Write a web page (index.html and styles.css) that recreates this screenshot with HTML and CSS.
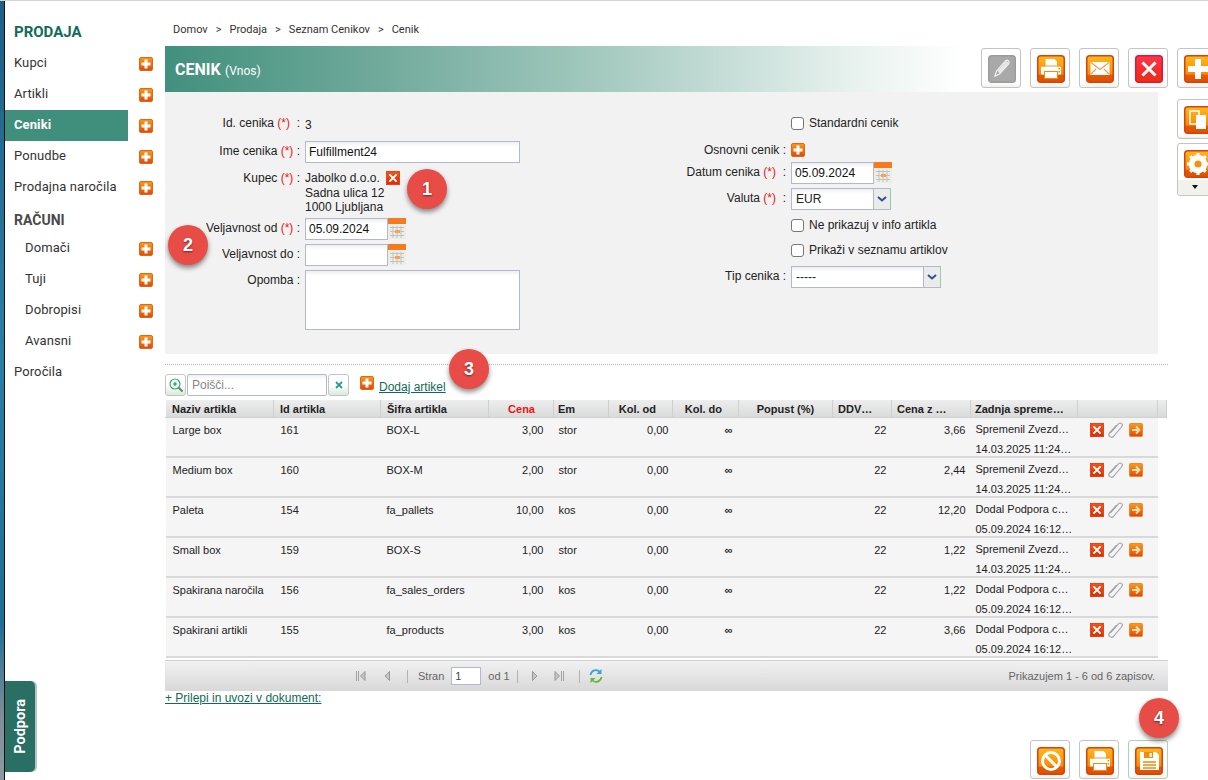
FILE: index.html
```html
<!DOCTYPE html>
<html lang="sl">
<head>
<meta charset="utf-8">
<title>Cenik</title>
<link rel="stylesheet" href="styles.css">
</head>
<body>
<svg class="defs" width="0" height="0" aria-hidden="true">
  <defs>
    <linearGradient id="go" x1="0" y1="0" x2="0" y2="1">
      <stop offset="0" stop-color="#ffb81c"/><stop offset=".7" stop-color="#f98a08"/><stop offset=".72" stop-color="#e35a04"/><stop offset="1" stop-color="#e04f02"/>
    </linearGradient>
    <linearGradient id="gr" x1="0" y1="0" x2="0" y2="1">
      <stop offset="0" stop-color="#f7394a"/><stop offset=".65" stop-color="#f22b2b"/><stop offset="1" stop-color="#e8320c"/>
    </linearGradient>
    <linearGradient id="gs" x1="0" y1="0" x2="0" y2="1">
      <stop offset="0" stop-color="#fb9b14"/><stop offset="1" stop-color="#e2480a"/>
    </linearGradient>
    <linearGradient id="gx" x1="0" y1="0" x2="0" y2="1">
      <stop offset="0" stop-color="#f5541b"/><stop offset="1" stop-color="#dc2c02"/>
    </linearGradient>
    <symbol id="plus" viewBox="0 0 14 14">
      <rect x=".5" y=".5" width="13" height="13" rx="1.500" fill="url(#gs)" stroke="#dd6a1a"/>
      <path d="M5.500 2.500h3v3h3v3h-3v3h-3v-3h-3v-3h3z" fill="#fff"/>
    </symbol>
    <symbol id="del" viewBox="0 0 14 14">
      <rect x=".5" y=".5" width="13" height="13" fill="url(#gx)" stroke="#e8431a"/>
      <path d="M3.400 3.400l7.200 7.200M10.600 3.400l-7.200 7.200" stroke="#fff" stroke-width="2"/>
    </symbol>
    <symbol id="next" viewBox="0 0 14 14">
      <rect x=".5" y=".5" width="13" height="13" rx="1" fill="url(#gs)" stroke="#ee8a2e"/>
      <path d="M3 7h7M7 3.500L10.500 7 7 10.500" fill="none" stroke="#ffe0b0" stroke-width="1.800"/>
    </symbol>
    <symbol id="clip" viewBox="0 0 18 18">
      <path d="M4.500 12L12.500 2.800C14.500 .8 17.500 3.300 15.800 5.500L7.500 15.500C5.500 17.500 1.500 15 3.300 12.200L10.500 4" fill="none" stroke="#a2a2a2" stroke-width="1.100"/>
    </symbol>
    <symbol id="cal" viewBox="0 0 18 21">
      <rect y="0" width="18" height="6" fill="#f47b20"/>
      <rect y="6" width="18" height="15" fill="#ecece8"/>
      <path d="M2 9.500h14M2 13.500h14M2 17.500h14M5 8v12M9 8v12M13 8v12" stroke="#c2c2c0" stroke-width="1"/>
      <rect x="7" y="12" width="5" height="3" fill="#f9a15a"/>
    </symbol>
    <symbol id="tile-o" viewBox="0 0 28 28">
      <rect x=".75" y=".75" width="26.500" height="26.500" rx="3" fill="url(#go)" stroke="#d8430c" stroke-width="1.500"/>
    </symbol>
    <symbol id="tile-r" viewBox="0 0 28 28">
      <rect x=".75" y=".75" width="26.500" height="26.500" rx="3" fill="url(#gr)" stroke="#e8123c" stroke-width="1.500"/>
    </symbol>
    <symbol id="tile-g" viewBox="0 0 28 28">
      <rect x=".75" y=".75" width="26.500" height="26.500" rx="3" fill="#a9a9a9" stroke="#9c9c9c" stroke-width="1.500"/>
    </symbol>
    <symbol id="printer" viewBox="0 0 28 28">
      <path d="M8.500 12V4h9l2.500 2.500V12z" fill="#fff"/>
      <path d="M4 11.500h20v8H4z" fill="#fff"/>
      <path d="M4 11h20" stroke="#f29a2a" stroke-width="1"/>
      <rect x="21.500" y="13" width="1.500" height="1.500" fill="#f08a10"/>
      <rect x="21.500" y="16" width="1.500" height="1.500" fill="#f08a10"/>
      <rect x="7.500" y="16.500" width="13" height="7" fill="#fff" stroke="#f08a10"/>
    </symbol>
  </defs>
</svg>

<div class="shell">
  <div class="edge"></div>

  <nav class="side">
    <h2 class="side-head">PRODAJA</h2>
    <div class="nav-row"><a class="nav-link">Kupci</a><svg class="ico14"><use href="#plus"/></svg></div>
    <div class="nav-row"><a class="nav-link">Artikli</a><svg class="ico14"><use href="#plus"/></svg></div>
    <div class="nav-row"><a class="nav-link nav-active">Ceniki</a><svg class="ico14"><use href="#plus"/></svg></div>
    <div class="nav-row"><a class="nav-link">Ponudbe</a><svg class="ico14"><use href="#plus"/></svg></div>
    <div class="nav-row"><a class="nav-link">Prodajna naročila</a><svg class="ico14"><use href="#plus"/></svg></div>
    <h3 class="side-sub">RAČUNI</h3>
    <div class="nav-row"><a class="nav-link nav-indent">Domači</a><svg class="ico14"><use href="#plus"/></svg></div>
    <div class="nav-row"><a class="nav-link nav-indent">Tuji</a><svg class="ico14"><use href="#plus"/></svg></div>
    <div class="nav-row"><a class="nav-link nav-indent">Dobropisi</a><svg class="ico14"><use href="#plus"/></svg></div>
    <div class="nav-row"><a class="nav-link nav-indent">Avansni</a><svg class="ico14"><use href="#plus"/></svg></div>
    <div class="nav-row"><a class="nav-link">Poročila</a></div>
  </nav>

  <main class="main">
    <div class="crumbs"><span>Domov</span><b>&gt;</b><span>Prodaja</span><b>&gt;</b><span>Seznam Cenikov</span><b>&gt;</b><span>Cenik</span></div>

    <div class="head-row">
      <div class="title-bar"><strong>CENIK</strong> <span>(Vnos)</span></div>
      <div class="tools">
        <button class="tool"><svg class="tile" viewBox="0 0 28 28"><use href="#tile-g"/><path d="M7 21l1.500-5 9-10c1-1 2.400-.6 3 0s1 1.800 0 3l-9 10z" fill="none" stroke="#eee" stroke-width="1.300"/><path d="M9.500 16l9-10 2.500 2.500-9 10z" fill="#e8e8e8"/></svg></button>
        <button class="tool"><svg class="tile" viewBox="0 0 28 28"><use href="#tile-o"/><use href="#printer"/></svg></button>
        <button class="tool"><svg class="tile" viewBox="0 0 28 28"><use href="#tile-o"/><rect x="4.500" y="7" width="19" height="13" fill="#fff"/><path d="M5 7.500l9 7 9-7M5 19l5-5M23 19l-5-5" fill="none" stroke="#f39a4a" stroke-width="1.100"/></svg></button>
        <button class="tool"><svg class="tile" viewBox="0 0 28 28"><use href="#tile-r"/><path d="M7.500 7.500l13 13M20.500 7.500l-13 13" stroke="#fff" stroke-width="3"/></svg></button>
        <button class="tool"><svg class="tile" viewBox="0 0 28 28"><use href="#tile-o"/><path d="M11 4h6v7h7v6h-7v7h-6v-7H4v-6h7z" fill="#fff"/></svg></button>
      </div>
    </div>

    <div class="form-row">
      <form class="panel">
        <div class="col col-l">
          <div class="fr h-id"><label class="lab">Id. cenika <i>(*)</i> &nbsp;:</label><span class="val val-id">3</span></div>
          <div class="fr h-ime"><label class="lab">Ime cenika <i>(*)</i> :</label><input class="inp inp-w" value="Fulfillment24"></div>
          <div class="fr h-kup"><label class="lab">Kupec <i>(*)</i> :</label>
            <div class="val kup"><div class="kup-top">Jabolko d.o.o. <svg class="ico14"><use href="#del"/></svg></div><div>Sadna ulica 12</div><div>1000 Ljubljana</div></div>
          </div>
          <div class="fr h-dat"><label class="lab">Veljavnost od <i>(*)</i> :</label><input class="inp inp-d" value="05.09.2024"><svg class="cal"><use href="#cal"/></svg></div>
          <div class="fr h-dat2"><label class="lab">Veljavnost do :</label><input class="inp inp-d"><svg class="cal"><use href="#cal"/></svg></div>
          <div class="fr"><label class="lab">Opomba :</label><textarea class="inp area"></textarea></div>
        </div>
        <div class="col col-r">
          <div class="fr h-r1"><span class="lab"></span><label class="chk"><input type="checkbox">Standardni cenik</label></div>
          <div class="fr h-r2"><label class="lab">Osnovni cenik :</label><svg class="ico14"><use href="#plus"/></svg></div>
          <div class="fr h-r3"><label class="lab">Datum cenika <i>(*)</i> &nbsp;:</label><input class="inp inp-d" value="05.09.2024"><svg class="cal"><use href="#cal"/></svg></div>
          <div class="fr h-r4"><label class="lab">Valuta <i>(*)</i> &nbsp;:</label><div class="sel sel-s"><span>EUR</span><em><svg width="10" height="6" viewBox="0 0 10 6"><path d="M1 1l4 3.500L9 1" fill="none" stroke="#2f4f8f" stroke-width="2"/></svg></em></div></div>
          <div class="fr h-r5"><span class="lab"></span><label class="chk"><input type="checkbox">Ne prikazuj v info artikla</label></div>
          <div class="fr h-r6"><span class="lab"></span><label class="chk"><input type="checkbox">Prikaži v seznamu artiklov</label></div>
          <div class="fr"><label class="lab">Tip cenika :</label><div class="sel sel-l"><span>-----</span><em><svg width="10" height="6" viewBox="0 0 10 6"><path d="M1 1l4 3.500L9 1" fill="none" stroke="#2f4f8f" stroke-width="2"/></svg></em></div></div>
        </div>
      </form>
      <div class="side-tools">
        <button class="tool"><svg class="tile" viewBox="0 0 28 28"><use href="#tile-o"/><path d="M6 5h9v13H6z" fill="none" stroke="#fff" stroke-width="1.500"/><rect x="12" y="9" width="10" height="14" fill="#fff"/></svg></button>
        <div class="tool tool-drop"><svg class="tile" viewBox="0 0 28 28"><use href="#tile-o"/><circle cx="14" cy="14" r="7" fill="none" stroke="#fff" stroke-width="4.500"/><path d="M14 3v22M3 14h22M6.200 6.200l15.600 15.600M21.800 6.200L6.200 21.800" stroke="#fff" stroke-width="3.200"/><circle cx="14" cy="14" r="3.500" fill="#f39010"/></svg><span class="caret"></span></div>
      </div>
    </div>

    <div class="dots"></div>

    <div class="search-row">
      <span class="s-btn"><svg width="16" height="16" viewBox="0 0 16 16"><circle cx="7" cy="7" r="5" fill="#eefbf2" stroke="#4aa56f" stroke-width="1.200"/><path d="M5 7h4M7 5v4" stroke="#1e9a4c" stroke-width="1.200"/><path d="M10.500 10.500l4 4" stroke="#4c8f5f" stroke-width="2"/></svg></span>
      <input class="inp s-inp" placeholder="Poišči...">
      <span class="s-btn"><svg width="10" height="10" viewBox="0 0 10 10"><path d="M2 2l6 6M8 2L2 8" stroke="#2b9d94" stroke-width="1.800"/></svg></span>
      <svg class="ico14 add-ico"><use href="#plus"/></svg>
      <a class="link add-link">Dodaj artikel</a>
    </div>

    <table class="grid">
      <colgroup><col class="c1"><col class="c2"><col class="c3"><col class="c4"><col class="c5"><col class="c6"><col class="c7"><col class="c8"><col class="c9"><col class="c10"><col class="c11"><col class="c12"><col class="c13"></colgroup>
      <thead><tr>
        <th>Naziv artikla</th><th>Id artikla</th><th>Šifra artikla</th><th class="r red">Cena</th><th>Em</th><th class="r">Kol. od</th><th class="r">Kol. do</th><th class="ctr">Popust (%)</th><th>DDV…</th><th>Cena z …</th><th>Zadnja spreme…</th><th></th><th></th>
      </tr></thead>
      <tbody>
        <tr><td>Large box</td><td>161</td><td>BOX-L</td><td class="r">3,00</td><td>stor</td><td class="r">0,00</td><td class="r">∞</td><td></td><td class="r">22</td><td class="r">3,66</td><td class="ch"><div class="ch-in">Spremenil Zvezd…<br>14.03.2025 11:24…</div></td><td class="acts"><svg class="ico14"><use href="#del"/></svg><svg class="clip"><use href="#clip"/></svg><svg class="ico14"><use href="#next"/></svg></td><td class="blank"></td></tr>
        <tr><td>Medium box</td><td>160</td><td>BOX-M</td><td class="r">2,00</td><td>stor</td><td class="r">0,00</td><td class="r">∞</td><td></td><td class="r">22</td><td class="r">2,44</td><td class="ch"><div class="ch-in">Spremenil Zvezd…<br>14.03.2025 11:24…</div></td><td class="acts"><svg class="ico14"><use href="#del"/></svg><svg class="clip"><use href="#clip"/></svg><svg class="ico14"><use href="#next"/></svg></td><td class="blank"></td></tr>
        <tr><td>Paleta</td><td>154</td><td>fa_pallets</td><td class="r">10,00</td><td>kos</td><td class="r">0,00</td><td class="r">∞</td><td></td><td class="r">22</td><td class="r">12,20</td><td class="ch"><div class="ch-in">Dodal Podpora c…<br>05.09.2024 16:12…</div></td><td class="acts"><svg class="ico14"><use href="#del"/></svg><svg class="clip"><use href="#clip"/></svg><svg class="ico14"><use href="#next"/></svg></td><td class="blank"></td></tr>
        <tr><td>Small box</td><td>159</td><td>BOX-S</td><td class="r">1,00</td><td>stor</td><td class="r">0,00</td><td class="r">∞</td><td></td><td class="r">22</td><td class="r">1,22</td><td class="ch"><div class="ch-in">Spremenil Zvezd…<br>14.03.2025 11:24…</div></td><td class="acts"><svg class="ico14"><use href="#del"/></svg><svg class="clip"><use href="#clip"/></svg><svg class="ico14"><use href="#next"/></svg></td><td class="blank"></td></tr>
        <tr><td>Spakirana naročila</td><td>156</td><td>fa_sales_orders</td><td class="r">1,00</td><td>kos</td><td class="r">0,00</td><td class="r">∞</td><td></td><td class="r">22</td><td class="r">1,22</td><td class="ch"><div class="ch-in">Dodal Podpora c…<br>05.09.2024 16:12…</div></td><td class="acts"><svg class="ico14"><use href="#del"/></svg><svg class="clip"><use href="#clip"/></svg><svg class="ico14"><use href="#next"/></svg></td><td class="blank"></td></tr>
        <tr><td>Spakirani artikli</td><td>155</td><td>fa_products</td><td class="r">3,00</td><td>kos</td><td class="r">0,00</td><td class="r">∞</td><td></td><td class="r">22</td><td class="r">3,66</td><td class="ch"><div class="ch-in">Dodal Podpora c…<br>05.09.2024 16:12…</div></td><td class="acts"><svg class="ico14"><use href="#del"/></svg><svg class="clip"><use href="#clip"/></svg><svg class="ico14"><use href="#next"/></svg></td><td class="blank"></td></tr>
      </tbody>
    </table>

    <div class="pager">
      <div class="pg-mid">
        <svg class="pg" viewBox="0 0 12 12"><path d="M1.500 1v10M3.500 1v10" stroke="#a5a5a5"/><path d="M10 1.500L5.500 6l4.500 4.500z" fill="#c5c5c5" stroke="#999"/></svg>
        <svg class="pg pg-g" viewBox="0 0 12 12"><path d="M8.500 1.500L4 6l4.500 4.500z" fill="#c5c5c5" stroke="#999"/></svg>
        <i class="sep"></i>
        <span class="pg-t">Stran</span><input class="pg-inp" value="1"><span class="pg-t">od 1</span>
        <i class="sep sep2"></i>
        <svg class="pg pg-n" viewBox="0 0 12 12"><path d="M3.500 1.500L8 6l-4.500 4.500z" fill="#c5c5c5" stroke="#999"/></svg>
        <svg class="pg pg-l" viewBox="0 0 12 12"><path d="M2 1.500L6.500 6 2 10.500z" fill="#c5c5c5" stroke="#999"/><path d="M8.500 1v10M10.500 1v10" stroke="#a5a5a5"/></svg>
        <i class="sep sep3"></i>
        <svg class="refresh" viewBox="0 0 16 16"><path d="M2.500 7a5.500 5.500 0 0 1 9.500-3" fill="none" stroke="#3fa3d1" stroke-width="1.800"/><path d="M13.500 1v5h-5z" fill="#3fa3d1"/><path d="M13.500 9a5.500 5.500 0 0 1-9.500 3" fill="none" stroke="#63b83f" stroke-width="1.800"/><path d="M2.500 15v-5h5z" fill="#63b83f"/></svg>
      </div>
      <span class="pg-info">Prikazujem 1 - 6 od 6 zapisov.</span>
    </div>
    <a class="link paste">+ Prilepi in uvozi v dokument:</a>

    <div class="foot-tools">
      <button class="tool"><svg class="tile" viewBox="0 0 28 28"><use href="#tile-o"/><circle cx="14" cy="14" r="8.500" fill="none" stroke="#fff" stroke-width="3"/><path d="M8 8l12 12" stroke="#fff" stroke-width="3"/></svg></button>
      <button class="tool"><svg class="tile" viewBox="0 0 28 28"><use href="#tile-o"/><use href="#printer"/></svg></button>
      <button class="tool tool-save"><svg class="tile" viewBox="0 0 28 28"><use href="#tile-o"/><path d="M5 5h16l3 3v15H5z" fill="#fff"/><rect x="9" y="5" width="9" height="6" fill="#f08a10"/><rect x="14.500" y="6" width="2.200" height="4" fill="#fff"/><path d="M8 15h13M8 18h13M8 21h13" stroke="#f08a10" stroke-width="1.300"/></svg></button>
    </div>
  </main>
</div>

<span class="badge b1">1</span>
<span class="badge b2">2</span>
<span class="badge b3">3</span>
<span class="badge b4">4</span>
<div class="podpora"><span>Podpora</span></div>
</body>
</html>
```

FILE: styles.css
```css
* { box-sizing: border-box; }
html, body { margin: 0; padding: 0; height: 100%; }
body {
  width: 1208px; height: 780px; overflow: hidden; position: relative;
  background: #fff; color: #222;
  font: 12px "Liberation Sans", Arial, sans-serif;
  border-top: 1px solid #d5d5d5;
}
.defs { position: absolute; }
.shell { display: flex; height: 779px; }
.edge {
  flex: 0 0 5px; border-right: 1px solid #111;
  background: linear-gradient(180deg, #1f5f86 0%, #2a7fa6 45%, #1e6f96 80%, #7f8f99 92%, #8a9aa0 100%);
}

/* sidebar */
.side { flex: 0 0 160px; padding-top: 22px; font-family: Roboto, sans-serif; font-size: 13px; color: #333; }
.side-head { margin: 0 0 0 9px; height: 25px; line-height: 18px; font-size: 15px; font-weight: 700; color: #126b59; }
.side-sub { margin: 0 0 0 9px; height: 30px; padding-top: 6px; line-height: 22px; font-size: 14px; font-weight: 700; color: #4a4a4a; }
.nav-row { display: flex; align-items: center; height: 31px; }
.nav-link { display: block; width: 123px; height: 31px; line-height: 30px; padding-left: 9px; flex: none; margin-right: 11px; letter-spacing: .1px; }
.nav-active { background: #3f8f7c; color: #fff; font-weight: 700; }
.nav-indent { padding-left: 20px; }
.ico14 { width: 14px; height: 14px; flex: none; display: block; }

/* main */
.main { flex: 1; min-width: 0; }
.crumbs { height: 45px; padding: 22px 0 0 8px; font: 11px/13px Roboto, sans-serif; color: #333; display: flex; }
.crumbs b { font-weight: 400; margin: 0 8px; }
.head-row { display: flex; height: 46px; }
.title-bar {
  flex: 0 0 806px; padding: 14px 0 0 10px; color: #fff; line-height: 18px;
  background: linear-gradient(90deg, #41907d 0%, #6fa99a 26%, #a8ccc2 56%, #e7f1ee 85%, #fff 99%);
}
.title-bar strong { font: 700 16px Roboto, sans-serif; }
.title-bar span { font: 12px Roboto, sans-serif; margin-left: 1px; }
.tools { display: flex; gap: 9px; padding: 2px 0 0 10px; flex: none; }
.tool {
  width: 40px; height: 40px; padding: 6px; margin: 0; flex: none; display: block;
  background: linear-gradient(180deg, #fff 0, #fff 88%, #f1f2ec 100%);
  border: 1px solid #c4c4c4; border-radius: 3px;
}
.tile { width: 28px; height: 28px; display: block; }
.form-row { display: flex; align-items: flex-start; }
.panel { flex: 0 0 993px; height: 262px; background: #f2f2f2; display: flex; padding-top: 20px; }
.col { flex: none; }
.col-l { width: 495px; }
.col-r { width: 498px; }
.fr { display: flex; align-items: flex-start; }
.lab { flex: none; width: 135px; text-align: right; margin-right: 5px; line-height: 20px; color: #222; white-space: nowrap; }
.col-r .lab { width: 126px; }
.lab i { font-style: normal; color: #f01414; }
.val { line-height: 14px; }
.h-id { height: 28px; margin-top: 1px; }
.val-id { padding-top: 5px; }
.h-ime { height: 30px; }
.h-kup { height: 45px; }
.h-kup .lab { margin-top: -3px; }
.kup-top { display: flex; gap: 6px; align-items: center; height: 15px; margin-top: -1px; }
.kup-top + div { margin-top: 1px; }
.h-dat { height: 26px; margin-top: 2px; }
.h-dat2 { height: 26px; }
.inp {
  display: block; margin: 0; padding: 0 3px; height: 22px; color: #111;
  font: 12px "Liberation Sans", Arial, sans-serif;
  border: 1px solid #b4b8cc; background: linear-gradient(180deg, #eef0ee 0, #fff 5px); outline: 0; border-radius: 0;
}
.inp-w { width: 215px; }
.inp-d { width: 83px; }
.cal { width: 18px; height: 21px; display: block; flex: none; }
.area { width: 215px; height: 60px; resize: none; }
.h-r1 { margin-top: -4px; height: 30px; align-items: center; }
.h-r2 { height: 24px; align-items: center; }
.h-r3 { height: 26px; }
.h-r4 { height: 24px; }
.h-r5 { height: 26px; align-items: center; }
.h-r6 { height: 24px; margin-bottom: 4px; align-items: center; }
.chk { display: flex; align-items: center; gap: 5px; height: 14px; }
.chk input { appearance: none; margin: 0; width: 13px; height: 13px; border: 1px solid #777; border-radius: 3px; background: #fff; }
.sel { display: flex; height: 22px; border: 1px solid #b4b8cc; border-right-color: #8fd0a8; background: linear-gradient(180deg, #eef0ee 0, #fff 5px); align-items: center; }
.sel span { flex: 1; padding-left: 4px; }
.sel em { flex: 0 0 17px; height: 20px; border-left: 1px solid #b4b8cc; background: #e9ecea; display: flex; align-items: center; justify-content: center; }
.sel-s { width: 100px; }
.sel-l { width: 150px; }
.side-tools { margin: 7px 0 0 19px; display: flex; flex-direction: column; gap: 4px; }
.tool-drop { height: 53px; position: relative; }
.tool-drop::before { content: ""; position: absolute; left: 0; right: 0; bottom: 0; height: 15px; background: #f1f2ec; border-radius: 0 0 3px 3px; }
.caret { position: absolute; z-index: 1; left: 14px; bottom: 6px; width: 0; height: 0; border: 3px solid transparent; border-top: 4px solid #111; border-bottom: 0; }
.dots { height: 1px; width: 1003px; margin-top: 10px; border-top: 1px dotted #b5b5b5; }
.search-row { display: flex; align-items: center; height: 35px; padding-top: 5px; }
.s-btn { width: 21px; height: 22px; border: 1px solid #c4c4c4; border-radius: 3px; display: flex; align-items: center; justify-content: center; background: linear-gradient(180deg, #fff 50%, #d9ebdc 100%); flex: none; }
.s-inp { width: 140px; height: 22px; border-radius: 2px; margin: 0 1px; padding: 0 4px; }
.s-inp::placeholder { color: #888; opacity: 1; }
.add-ico { margin: -4px 5px 0 11px; }
.link { color: #0f6b55; text-decoration: underline; }
.add-link { padding-top: 3px; }

/* table */
.grid { table-layout: fixed; width: 1001px; border-collapse: collapse; font-size: 11px; }
.c1, .c3 { width: 108px; }
.c2, .c11 { width: 107px; }
.c4 { width: 65px; } .c5 { width: 55px; } .c6 { width: 64px; } .c7 { width: 66px; } .c8 { width: 94px; }
.c9 { width: 59px; } .c10 { width: 79px; } .c12 { width: 80px; } .c13 { width: 9px; }
.grid th {
  height: 17px; padding: 1px 6px 0; text-align: left; font-weight: 700; color: #222; white-space: nowrap; overflow: hidden;
  background: linear-gradient(180deg, #ededed, #d9dada); border-left: 1px solid #fff; border-bottom: 1px solid #d0d0d0; border-right: 1px solid #cfcfcf;
}
.grid th.r, .grid td.r { text-align: right; }
.grid th.ctr { text-align: center; }
.grid th.red { color: #f01010; padding-right: 18px; }
.grid th:nth-child(5) { padding-left: 4px; }
.grid th:nth-child(6), .grid th:nth-child(7) { padding-right: 16px; }
.grid th:nth-child(9), .grid th:nth-child(10) { padding-left: 5px; }
.grid th:nth-child(11) { padding-left: 4px; }
.grid td { height: 40px; vertical-align: top; padding: 5px 7px 0; background: #f5f5f5; border-bottom: 2px solid #d9d9d9; line-height: 14px; white-space: nowrap; color: #222; overflow: hidden; }
.grid td:nth-child(5) { padding-left: 5px; }
.grid td:nth-child(3) { padding-left: 6px; }
.grid td.r { padding-right: 5px; }
.grid td.r:nth-child(4) { padding-right: 10px; }
.grid td.r:nth-child(6) { padding-right: 4px; }
.grid td.r:nth-child(7) { padding-right: 6px; font-weight: 700; }
.grid td.ch { padding: 1px 0 0 5px; }
.ch-in { height: 36px; line-height: 20px; }
.grid td.acts { padding: 5px 0 0 12px; }
.acts svg { display: inline-block; vertical-align: top; }
.acts .clip { width: 18px; height: 18px; margin: -2px 5px 0 2px; }
.grid td.blank { background: #fff; border-bottom: 0; padding: 0; }

/* pager */
.pager {
  width: 1003px; height: 31px; margin-top: 2px; padding: 0 13px 0 190px; display: flex; align-items: center; justify-content: space-between;
  background: linear-gradient(180deg, #f1f1f1, #d8d8d8); border-top: 1px solid #d0d0d0; color: #666; font-size: 11px;
}
.pg-mid { display: flex; align-items: center; }
.pg { width: 12px; height: 12px; flex: none; display: block; }
.pg-g { margin-left: 14px; }
.pg-n { margin-left: 11px; }
.pg-l { margin-left: 12px; }
.sep { width: 1px; height: 13px; background: #b5b5a5; margin: 0 10px 0 14px; }
.sep2 { margin: 0 0 0 7px; }
.sep3 { margin: 0 8px 0 14px; }
.pg-inp { width: 30px; height: 18px; margin: 0 7px; padding: 0 3px; border: 1px solid #b4b8cc; font: 11px "Liberation Sans", Arial, sans-serif; color: #444; outline: 0; border-radius: 0; }
.refresh { width: 16px; height: 16px; display: block; }
.paste { display: block; font-size: 12px; height: 14px; line-height: 14px; width: max-content; }
.foot-tools { display: flex; gap: 9px; margin: 35px 0 0 865px; }
.foot-tools .tool { height: 39px; }
.tool-save { border-color: #a8d6b0; }

/* overlays */
.badge {
  position: absolute; width: 40px; height: 40px; border-radius: 50%; background: #e84c47; color: #fff;
  font: 700 18px/40px "Liberation Sans", Arial, sans-serif; text-align: center;
  box-shadow: 0 3px 5px rgba(0,0,0,.45); text-shadow: 0 1px 2px rgba(0,0,0,.5);
}
.b1 { left: 407px; top: 168px; }
.b2 { left: 168px; top: 224px; }
.b3 { left: 449px; top: 348px; }
.b4 { left: 1139px; top: 697px; }
.podpora {
  position: absolute; left: 5px; top: 680px; width: 30px; height: 91px;
  background: #2a6f64; border-radius: 0 5px 5px 0; box-shadow: 2px 0 0 #b7c4c2;
  display: flex; align-items: center; justify-content: center;
}
.podpora span { writing-mode: vertical-rl; transform: rotate(180deg); color: #fff; font: 700 14.500px Roboto, sans-serif; }
```
